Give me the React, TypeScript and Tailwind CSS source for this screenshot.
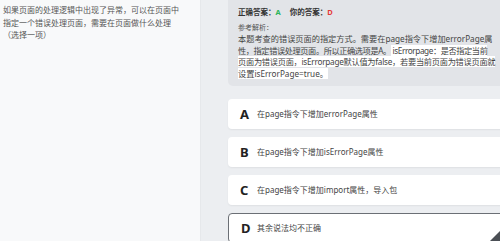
import React from "react";

const FONT = { fontFamily: '"Noto Sans", "Noto Sans CJK SC", sans-serif' };

const OPTIONS = [
  { key: "A", text: "在page指令下增加errorPage属性" },
  { key: "B", text: "在page指令下增加isErrorPage属性" },
  { key: "C", text: "在page指令下增加import属性，导入包" },
  { key: "D", text: "其余说法均不正确", selected: true },
];

export default function App() {
  return (
    <div className="flex w-[500px] h-[241px] overflow-hidden bg-[#eceef1]" style={FONT}>
      {/* 题干 */}
      <div className="w-[201px] shrink-0 bg-[#f8f9fa] border-r border-[#e6e8eb] pl-[3px] pt-[4px]">
        <p className="text-[8px] leading-[12.5px] text-[#555]">
          <span className="block whitespace-nowrap">如果页面的处理逻辑中出现了异常，可以在页面中</span>
          <span className="block whitespace-nowrap">指定一个错误处理页面，需要在页面做什么处理</span>
          <span className="block whitespace-nowrap">（选择一项）</span>
        </p>
      </div>

      {/* 答案与选项 */}
      <div className="w-[282px] shrink-0 ml-[27px] flex flex-col">
        <div className="bg-[#e2e4e8] rounded-b-[5px] pl-[10px] pt-[8px] pb-[7px] text-[#333]">
          <div className="flex gap-[9px] text-[7.5px] font-bold leading-[9px]">
            <span>
              正确答案：<span className="text-[#2bb55a]">A</span>
            </span>
            <span>
              你的答案：<span className="text-[#e53935]">D</span>
            </span>
          </div>
          <div className="mt-[6px] text-[7px] leading-[9px] text-[#555]">参考解析：</div>
          <div className="text-[8.2px] leading-[11.6px] text-[#444] mt-[1px]">
            <div className="whitespace-nowrap">本题考查的错误页面的指定方式。需要在page指令下增加errorPage属</div>
            <div className="whitespace-nowrap tracking-[-0.4px]">
              性，指定错误处理页面。所以正确选项是A。
              <span className="bg-white"> isErrorpage：是否指定当前</span>
            </div>
            <div className="whitespace-nowrap tracking-[-0.25px]">
              <span className="bg-white">页面为错误页面，isErrorpage默认值为false，若要当前页面为错误页面就</span>
            </div>
            <div className="whitespace-nowrap">
              <span className="bg-white">设置isErrorPage=true。</span>
            </div>
          </div>
        </div>

        <div className="mt-[13px] flex flex-col gap-[8px]">
          {OPTIONS.map((o) =>
            o.selected ? (
              <div
                key={o.key}
                className="relative h-[30px] shrink-0 bg-white rounded-[4px] border-[1.5px] border-[#6b6f75] flex items-center pl-[12px] overflow-hidden"
              >
                <span className="w-[15px] text-[13px] font-bold text-[#222] leading-none">{o.key}</span>
                <span className="ml-[1px] text-[8px] text-[#444]">{o.text}</span>
                <span className="absolute right-0 bottom-0 w-0 h-0 border-l-[20px] border-l-transparent border-b-[20px] border-b-[#4b4f55]" />
              </div>
            ) : (
              <div
                key={o.key}
                className="h-[30px] shrink-0 bg-white rounded-[4px] shadow-[0_1px_2px_rgba(0,0,0,0.06)] flex items-center pl-[12px]"
              >
                <span className="w-[17px] text-[13px] font-bold text-[#222] leading-none">{o.key}</span>
                <span className="text-[8px] text-[#444]">{o.text}</span>
              </div>
            )
          )}
        </div>
      </div>
    </div>
  );
}
